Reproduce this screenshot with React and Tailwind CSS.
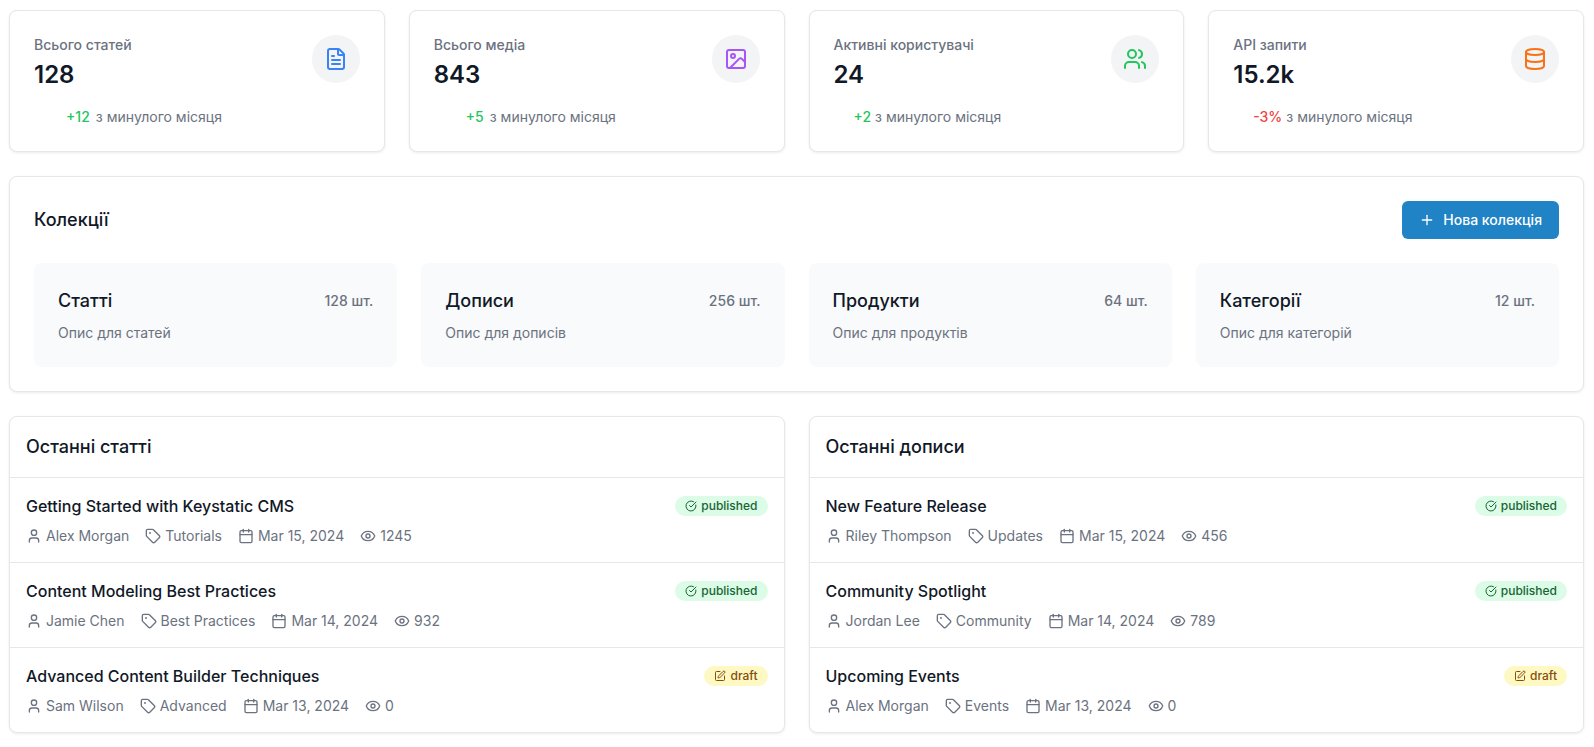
import {
  Calendar,
  CircleCheckBig,
  Database,
  Eye,
  FileText,
  Image,
  Plus,
  SquarePen,
  Tag,
  User,
  Users,
} from 'lucide-react';

const stats = [
  { label: 'Всього статей', value: '128', change: '+12', icon: FileText, iconColor: 'text-[#3b82f6]', changeColor: 'text-[#22c55e]', spacing: 'pl-8 gap-1.5' },
  { label: 'Всього медіа', value: '843', change: '+5', icon: Image, iconColor: 'text-[#a855f7]', changeColor: 'text-[#22c55e]', spacing: 'pl-8 gap-1.5' },
  { label: 'Активні користувачі', value: '24', change: '+2', icon: Users, iconColor: 'text-[#22c55e]', changeColor: 'text-[#22c55e]', spacing: 'pl-5 gap-1' },
  { label: 'API запити', value: '15.2k', change: '-3%', icon: Database, iconColor: 'text-[#f97316]', changeColor: 'text-[#ef4444]', spacing: 'pl-5 gap-1' },
];

const collections = [
  { name: 'Статті', description: 'Опис для статей', count: 128 },
  { name: 'Дописи', description: 'Опис для дописів', count: 256 },
  { name: 'Продукти', description: 'Опис для продуктів', count: 64 },
  { name: 'Категорії', description: 'Опис для категорій', count: 12 },
];

const articles = [
  { title: 'Getting Started with Keystatic CMS', author: 'Alex Morgan', category: 'Tutorials', date: 'Mar 15, 2024', views: 1245, status: 'published' },
  { title: 'Content Modeling Best Practices', author: 'Jamie Chen', category: 'Best Practices', date: 'Mar 14, 2024', views: 932, status: 'published' },
  { title: 'Advanced Content Builder Techniques', author: 'Sam Wilson', category: 'Advanced', date: 'Mar 13, 2024', views: 0, status: 'draft' },
];

const posts = [
  { title: 'New Feature Release', author: 'Riley Thompson', category: 'Updates', date: 'Mar 15, 2024', views: 456, status: 'published' },
  { title: 'Community Spotlight', author: 'Jordan Lee', category: 'Community', date: 'Mar 14, 2024', views: 789, status: 'published' },
  { title: 'Upcoming Events', author: 'Alex Morgan', category: 'Events', date: 'Mar 13, 2024', views: 0, status: 'draft' },
];

function StatCard({ stat }) {
  const Icon = stat.icon;

  return (
    <div className="rounded-lg border border-[#e5e7eb] bg-white p-6 shadow-[0_1px_3px_rgba(0,0,0,0.08)]">
      <div className="flex items-start justify-between">
        <div>
          <p className="text-sm font-medium text-[#6b7280]">{stat.label}</p>
          <p className="mt-1 text-2xl font-semibold">{stat.value}</p>
        </div>
        <div className="flex size-12 items-center justify-center rounded-full bg-[#f3f4f6]">
          <Icon className={`size-6 ${stat.iconColor}`} />
        </div>
      </div>
      <div className={`mt-4 flex text-sm ${stat.spacing}`}>
        <span className={`font-medium ${stat.changeColor}`}>{stat.change}</span>
        <span className="text-[#6b7280]">з минулого місяця</span>
      </div>
    </div>
  );
}

function StatusBadge({ status }) {
  const published = status === 'published';
  const Icon = published ? CircleCheckBig : SquarePen;

  return (
    <span
      className={`flex items-center gap-1 rounded-full px-2.5 py-0.5 text-xs font-medium ${
        published ? 'bg-[#dcfce7] text-[#166534]' : 'bg-[#fef9c3] text-[#854d0e]'
      }`}
    >
      <Icon className="size-3" />
      {status}
    </span>
  );
}

function MetaItem({ icon: Icon, children }) {
  return (
    <span className="flex items-center gap-1">
      <Icon className="size-4" />
      {children}
    </span>
  );
}

function RecentList({ title, items }) {
  return (
    <section className="rounded-lg border border-[#e5e7eb] bg-white shadow-[0_1px_3px_rgba(0,0,0,0.08)]">
      <h2 className="p-4 text-lg font-medium">{title}</h2>
      <ul>
        {items.map((item) => (
          <li key={item.title} className="border-t border-[#e5e7eb] p-4">
            <div className="flex items-center justify-between">
              <h3 className="font-medium">{item.title}</h3>
              <StatusBadge status={item.status} />
            </div>
            <div className="mt-2 flex flex-wrap gap-4 text-sm text-[#6b7280]">
              <MetaItem icon={User}>{item.author}</MetaItem>
              <MetaItem icon={Tag}>{item.category}</MetaItem>
              <MetaItem icon={Calendar}>{item.date}</MetaItem>
              <MetaItem icon={Eye}>{item.views}</MetaItem>
            </div>
          </li>
        ))}
      </ul>
    </section>
  );
}

export default function App() {
  return (
    <main className="space-y-6 bg-white py-2.5 pr-2.5 pl-[9px] font-['Inter',sans-serif] text-[#111827]">
      {/* Stats */}
      <div className="grid grid-cols-1 gap-6 sm:grid-cols-2 lg:grid-cols-4">
        {stats.map((stat) => (
          <StatCard key={stat.label} stat={stat} />
        ))}
      </div>

      {/* Collections */}
      <section className="rounded-lg border border-[#e5e7eb] bg-white p-6 shadow-[0_1px_3px_rgba(0,0,0,0.08)]">
        <div className="mb-6 flex items-center justify-between">
          <h2 className="text-lg font-medium">Колекції</h2>
          <button
            type="button"
            className="flex items-center gap-2 rounded-md border border-transparent bg-[#2083c5] px-4 py-2 text-sm font-medium text-white hover:bg-[#1b72ac]"
          >
            <Plus className="size-4" />
            Нова колекція
          </button>
        </div>
        <div className="grid grid-cols-1 gap-6 sm:grid-cols-2 lg:grid-cols-4">
          {collections.map((collection) => (
            <div key={collection.name} className="rounded-lg bg-[#f9fafb] p-6">
              <div className="flex items-center justify-between">
                <h3 className="text-lg font-medium">{collection.name}</h3>
                <span className="text-sm font-medium text-[#6b7280]">{collection.count} шт.</span>
              </div>
              <p className="mt-2 text-sm text-[#6b7280]">{collection.description}</p>
            </div>
          ))}
        </div>
      </section>

      {/* Recent content */}
      <div className="grid grid-cols-1 gap-6 lg:grid-cols-2">
        <RecentList title="Останні статті" items={articles} />
        <RecentList title="Останні дописи" items={posts} />
      </div>
    </main>
  );
}
